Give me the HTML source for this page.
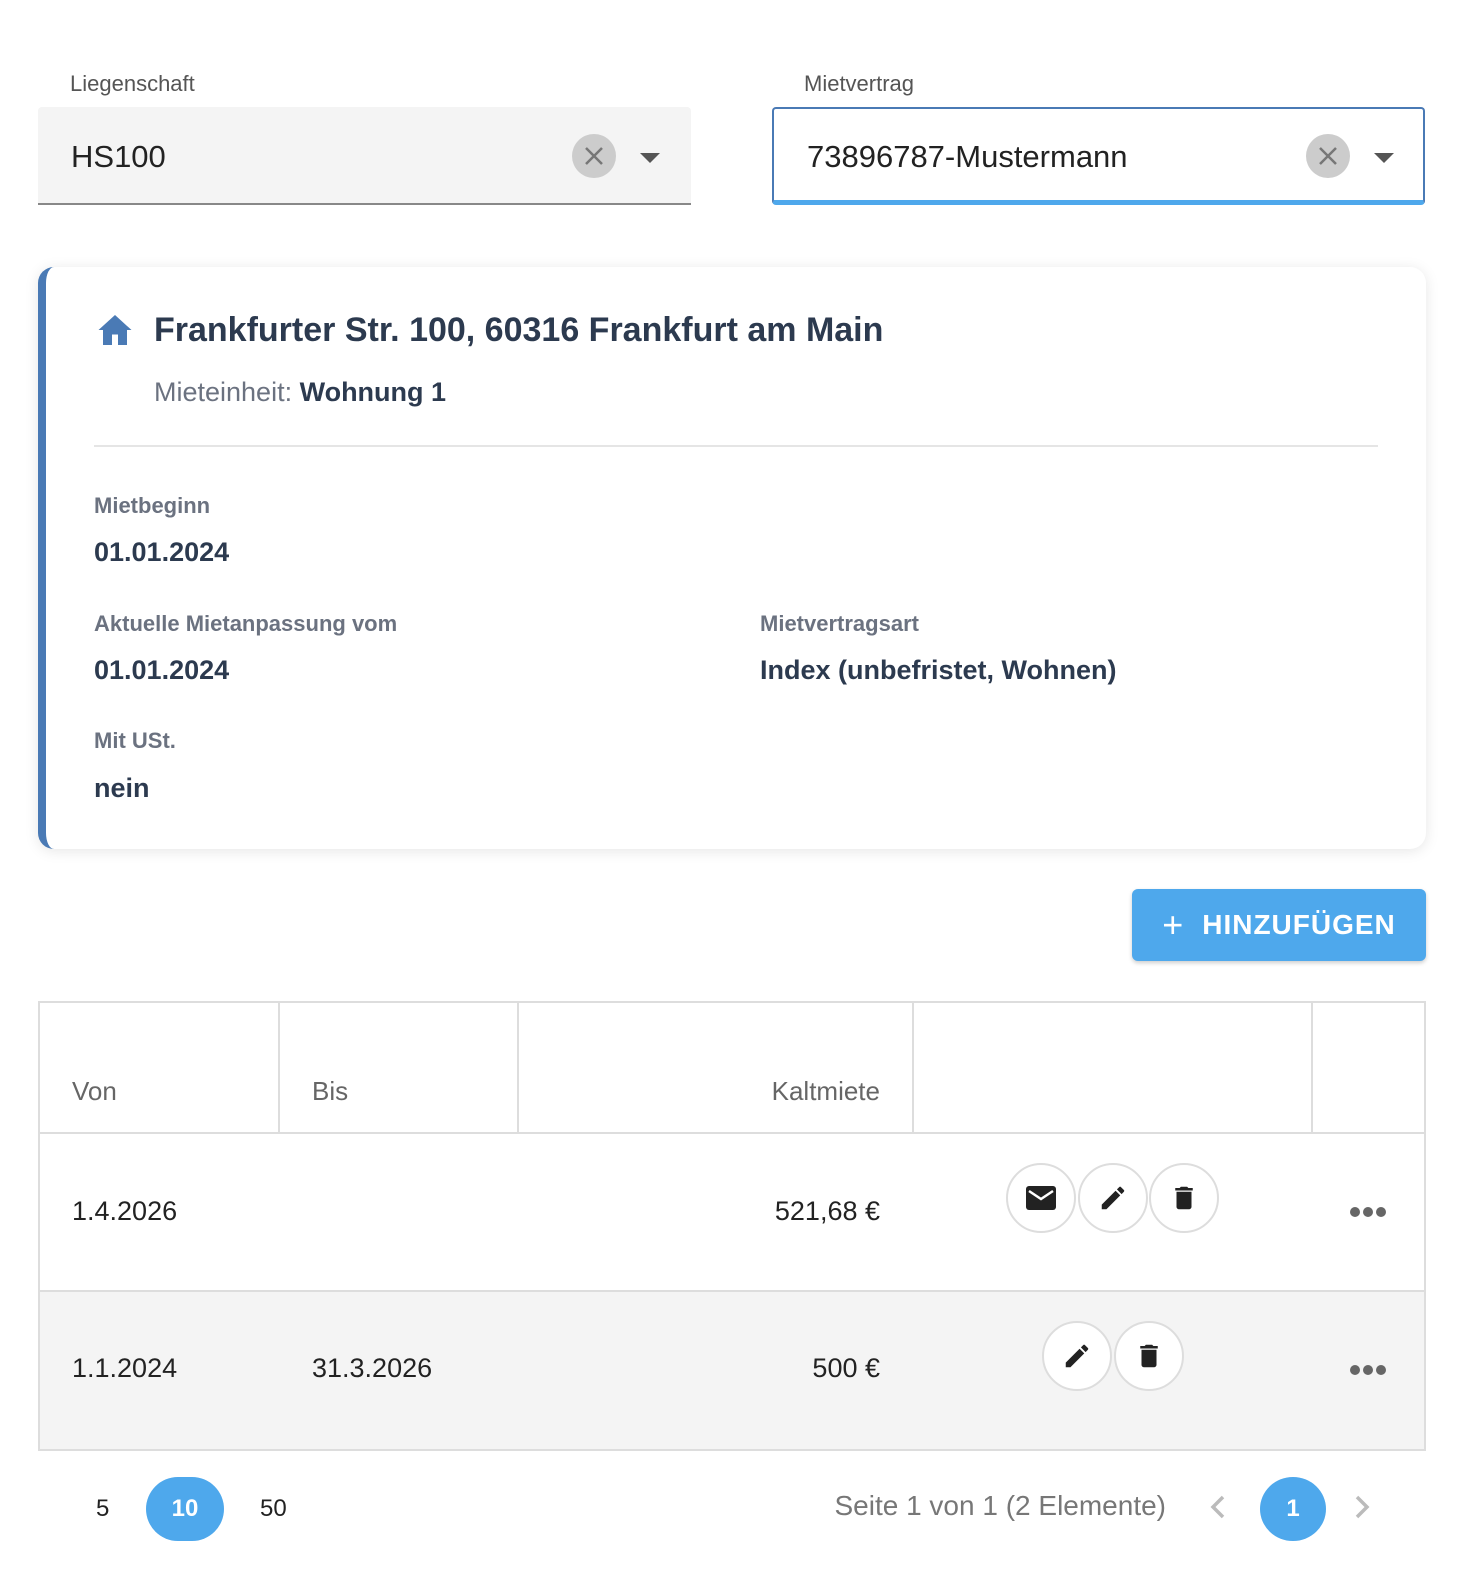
<!DOCTYPE html>
<html><head><meta charset="utf-8"><style>
*{box-sizing:border-box;margin:0;padding:0}
body{width:1466px;height:1572px;background:#fff;font-family:"Liberation Sans",Arial,sans-serif;position:relative;overflow:hidden;color:#222}
.a{position:absolute}
.lbl{font-size:22px;color:#555}
.field{position:absolute;top:107px;height:98px;width:653px}
.val{position:absolute;left:33px;top:32px;font-size:31px;color:#222}
.clr{position:absolute;top:27px;width:44px;height:44px;border-radius:50%;background:#ccc}
.caret{position:absolute;top:46px;width:0;height:0;border-left:10px solid transparent;border-right:10px solid transparent;border-top:10px solid #555}
.card{left:38px;top:267px;width:1388px;height:582px;border-radius:16px;background:#fff;box-shadow:0 2px 14px rgba(0,0,0,.1);border-left:8px solid #4a7ab5}
.k{font-size:22px;font-weight:bold;color:#6b7280}
.v{font-size:27px;font-weight:bold;color:#2c3a4f}
.th{font-size:26px;color:#666;top:1076px}
.td{font-size:27px;color:#222}
.circ{position:absolute;width:70px;height:70px;border-radius:50%;border:2px solid #ddd;background:#fff;display:flex;align-items:center;justify-content:center}
.vl{position:absolute;top:1001px;height:132px;width:2px;background:#ddd}
</style></head><body>
<div class="a lbl" style="left:70px;top:71px">Liegenschaft</div>
<div class="a lbl" style="left:804px;top:71px">Mietvertrag</div>
<div class="field" style="left:38px;background:#f4f4f4;border-bottom:2px solid #888;border-radius:4px 4px 0 0">
 <div class="val">HS100</div>
 <div class="clr" style="left:534px"><svg width="44" height="44"><path d="M14 14L30 30M30 14L14 30" stroke="#777" stroke-width="2.5"/></svg></div>
 <div class="caret" style="left:602px"></div>
</div>
<div class="field" style="left:772px;border:2px solid #4a7ab5;border-bottom:5px solid #4ea8ec;border-radius:4px">
 <div class="val" style="top:30px">73896787-Mustermann</div>
 <div class="clr" style="left:532px;top:25px"><svg width="44" height="44"><path d="M14 14L30 30M30 14L14 30" stroke="#777" stroke-width="2.5"/></svg></div>
 <div class="caret" style="left:600px;top:44px"></div>
</div>
<div class="a card">
 <svg class="a" style="left:51px;top:46px" width="36" height="34" viewBox="0 0 24 22"><path d="M12 1L1 11h3v10h6v-7h4v7h6V11h3z" fill="#4a7ab5"/></svg>
 <div class="a" style="left:108px;top:44px;font-size:34px;font-weight:bold;color:#2c3a4f">Frankfurter Str. 100, 60316 Frankfurt am Main</div>
 <div class="a" style="left:108px;top:110px;font-size:27px;color:#6b7280">Mieteinheit: <b style="color:#2c3a4f">Wohnung 1</b></div>
 <div class="a" style="left:48px;top:178px;width:1284px;height:2px;background:#e5e5e5"></div>
 <div class="a k" style="left:48px;top:226px">Mietbeginn</div>
 <div class="a v" style="left:48px;top:270px">01.01.2024</div>
 <div class="a k" style="left:48px;top:344px">Aktuelle Mietanpassung vom</div>
 <div class="a v" style="left:48px;top:388px">01.01.2024</div>
 <div class="a k" style="left:714px;top:344px">Mietvertragsart</div>
 <div class="a v" style="left:714px;top:388px">Index (unbefristet, Wohnen)</div>
 <div class="a k" style="left:48px;top:461px">Mit USt.</div>
 <div class="a v" style="left:48px;top:506px">nein</div>
</div>
<div class="a" style="left:1132px;top:889px;width:294px;height:72px;background:#4ea8ec;border-radius:6px;box-shadow:0 2px 4px rgba(0,0,0,.2);color:#fff;font-weight:bold;font-size:28px;letter-spacing:1px;display:flex;align-items:center;justify-content:center"><span style="font-size:36px;font-weight:normal;margin-right:18px">+</span>HINZUFÜGEN</div>
<div class="a" style="left:38px;top:1001px;width:1388px;height:450px;border:2px solid #ddd"></div>
<div class="a" style="left:40px;top:1290px;width:1384px;height:159px;background:#f4f4f4;border-top:2px solid #ddd"></div>
<div class="a" style="left:40px;top:1132px;width:1384px;height:2px;background:#ddd"></div>
<div class="vl" style="left:278px"></div><div class="vl" style="left:517px"></div><div class="vl" style="left:912px"></div><div class="vl" style="left:1311px"></div>
<div class="a th" style="left:72px">Von</div>
<div class="a th" style="left:312px">Bis</div>
<div class="a th" style="right:586px">Kaltmiete</div>
<div class="a td" style="left:72px;top:1196px">1.4.2026</div>
<div class="a td" style="right:586px;top:1196px">521,68 €</div>
<div class="a td" style="left:72px;top:1353px">1.1.2024</div>
<div class="a td" style="left:312px;top:1353px">31.3.2026</div>
<div class="a td" style="right:586px;top:1353px">500 €</div>
<div class="circ" style="left:1006px;top:1163px"><svg width="32" height="26" viewBox="0 0 32 26"><rect x="1" y="1" width="30" height="24" rx="3" fill="#222"/><path d="M4 6l12 8 12-8" stroke="#fff" stroke-width="2.5" fill="none"/></svg></div>
<div class="circ" style="left:1078px;top:1163px"><svg width="30" height="30" viewBox="0 0 24 24"><path d="M3 17.25V21h3.75L17.81 9.94l-3.750-3.75L3 17.25zM20.71 7.04a1 1 0 0 0 0-1.41l-2.34-2.34a1 1 0 0 0-1.41 0l-1.830 1.83 3.75 3.75 1.83-1.83z" fill="#222"/></svg></div>
<div class="circ" style="left:1149px;top:1163px"><svg width="30" height="30" viewBox="0 0 24 24"><path d="M6 19c0 1.1.9 2 2 2h8c1.1 0 2-.9 2-2V7H6v12zM19 4h-3.5l-1-1h-5l-1 1H5v2h14V4z" fill="#222"/></svg></div>
<div class="circ" style="left:1042px;top:1321px"><svg width="30" height="30" viewBox="0 0 24 24"><path d="M3 17.25V21h3.75L17.81 9.94l-3.75-3.75L3 17.25zM20.71 7.04a1 1 0 0 0 0-1.41l-2.34-2.34a1 1 0 0 0-1.41 0l-1.83 1.83 3.75 3.75 1.83-1.83z" fill="#222"/></svg></div>
<div class="circ" style="left:1114px;top:1321px"><svg width="30" height="30" viewBox="0 0 24 24"><path d="M6 19c0 1.1.9 2 2 2h8c1.1 0 2-.9 2-2V7H6v12zM19 4h-3.5l-1-1h-5l-1 1H5v2h14V4z" fill="#222"/></svg></div>
<svg class="a" style="left:1350px;top:1205px" width="36" height="14"><circle cx="5" cy="7" r="5" fill="#666"/><circle cx="18" cy="7" r="5" fill="#666"/><circle cx="31" cy="7" r="5" fill="#666"/></svg>
<svg class="a" style="left:1350px;top:1363px" width="36" height="14"><circle cx="5" cy="7" r="5" fill="#666"/><circle cx="18" cy="7" r="5" fill="#666"/><circle cx="31" cy="7" r="5" fill="#666"/></svg>
<div class="a" style="left:96px;top:1495px;font-size:24px">5</div>
<div class="a" style="left:146px;top:1477px;width:78px;height:64px;border-radius:32px;background:#4ea8ec;color:#fff;font-weight:bold;font-size:24px;display:flex;align-items:center;justify-content:center">10</div>
<div class="a" style="left:260px;top:1495px;font-size:24px">50</div>
<div class="a" style="right:300px;top:1490px;font-size:28px;color:#777">Seite 1 von 1 (2 Elemente)</div>
<svg class="a" style="left:1208px;top:1494px" width="20" height="26"><path d="M15 3L5 13l10 10" stroke="#bbb" stroke-width="3.5" fill="none"/></svg>
<div class="a" style="left:1260px;top:1477px;width:66px;height:64px;border-radius:50%;background:#4ea8ec;color:#fff;font-weight:bold;font-size:24px;display:flex;align-items:center;justify-content:center">1</div>
<svg class="a" style="left:1352px;top:1494px" width="20" height="26"><path d="M5 3l10 10L5 23" stroke="#bbb" stroke-width="3.5" fill="none"/></svg>
</body></html>
